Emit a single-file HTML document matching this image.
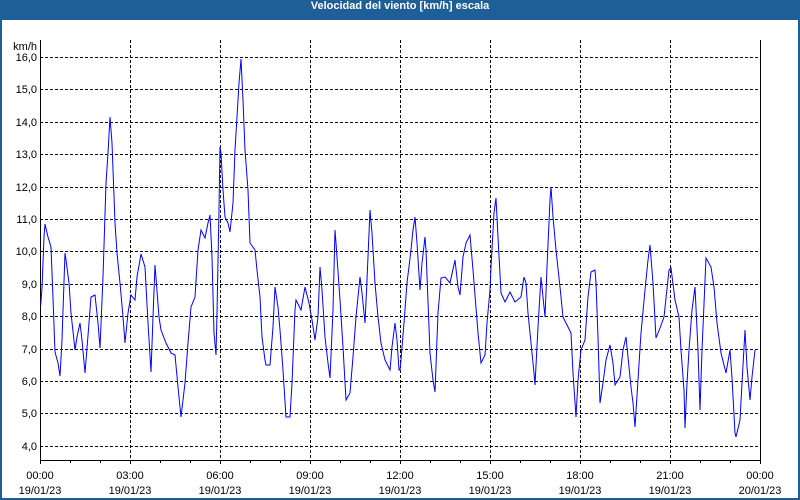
<!DOCTYPE html>
<html><head><meta charset="utf-8"><style>
html,body{margin:0;padding:0;width:800px;height:500px;overflow:hidden;background:#1e5f98;}
#w{position:absolute;left:2px;top:20px;width:796px;height:478px;background:#fff;}
#t{position:absolute;left:0;top:0;width:800px;height:20px;line-height:20px;text-align:center;color:#fff;font:bold 11px "Liberation Sans",sans-serif;}
svg{position:absolute;left:0;top:0}
text{font-family:"Liberation Sans",sans-serif;font-size:11px;fill:#000}
</style></head><body>
<div id="t">Velocidad del viento [km/h] escala</div>
<div id="w"></div>
<svg width="800" height="500" viewBox="0 0 800 500">
<g stroke="#000" stroke-width="1" stroke-dasharray="3,2" fill="none" shape-rendering="crispEdges">
<path d="M40 57.5H760M40 89.5H760M40 122.5H760M40 154.5H760M40 187.5H760M40 219.5H760M40 251.5H760M40 284.5H760M40 316.5H760M40 349.5H760M40 381.5H760M40 413.5H760M40 446.5H760"/>
<path d="M130.5 40V460M220.5 40V460M310.5 40V460M400.5 40V460M490.5 40V460M580.5 40V460M670.5 40V460"/>
</g>
<g stroke="#000" stroke-width="1" fill="none" shape-rendering="crispEdges">
<path d="M40.5 40V460.5H760.5V40"/>
<path d="M40.5 460v4M70.5 460v3M100.5 460v3M130.5 460v4M160.5 460v3M190.5 460v3M220.5 460v4M250.5 460v3M280.5 460v3M310.5 460v4M340.5 460v3M370.5 460v3M400.5 460v4M430.5 460v3M460.5 460v3M490.5 460v4M520.5 460v3M550.5 460v3M580.5 460v4M610.5 460v3M640.5 460v3M670.5 460v4M700.5 460v3M730.5 460v3M760.5 460v4"/>
</g>
<polyline fill="none" stroke="#0000ff" stroke-width="1" points="40.7,305 42,288 44,237 45,224 48,237 51,247 53,298 55,352 58,363 60,376 62,340 65,253 66,260 69,283 71,313 75,350 77,337 80,323 82,340 85,373 89,323 91,297 95,295 98,323 100,348 103,277 106,183 108,153 110,117 112,143 115,223 117,253 120,283 123,317 125,343 128,313 131,295 135,300 137,277 141,254 145,267 148,323 151,372 153,317 155,265 159,317 161,330 166,343 171,353 175,355 178,387 181,417 185,383 188,343 191,307 195,297 198,250 201,230 205,238 208,223 210,215 212,257 214,333 216,355 217,313 219,210 220,147 221,153 223,190 225,217 228,223 230,232 233,203 235,150 237,117 239,83 241,59 243,100 245,150 248,190 250,243 255,250 257,270 260,297 262,337 265,360 266,365 270,365 273,327 275,287 278,307 280,330 283,370 286,417 290,417 292,383 295,310 296,300 301,310 305,287 309,303 312,320 315,340 318,317 320,267 322,290 325,337 328,363 330,378 333,310 335,230 336,243 340,300 343,347 346,400 350,393 353,357 356,317 360,277 362,293 365,323 367,280 370,210 372,233 375,283 378,317 381,343 385,360 390,370 392,347 395,323 397,340 399,370 400,370 401,360 404,323 407,283 411,250 413,230 415,217 417,243 420,290 422,263 425,237 426,250 430,353 433,380 435,392 438,313 441,278 445,277 450,283 455,260 458,287 460,295 463,257 466,243 470,235 473,270 478,333 481,363 485,355 487,323 490,290 491,267 494,213 496,198 498,237 501,293 505,302 510,292 515,302 521,297 524,277 526,283 528,313 531,343 534,373 535,385 538,327 541,277 545,317 547,267 550,200 551,187 553,217 556,250 560,287 563,317 568,327 571,333 573,373 576,417 578,380 581,350 585,340 588,297 591,272 595,270 596,283 598,337 600,403 603,383 606,360 610,345 613,363 615,385 620,377 623,350 626,337 628,357 631,387 633,403 635,427 638,380 641,333 645,290 648,260 650,245 653,283 656,338 660,328 664,317 669,270 671,268 675,300 679,317 681,350 684,390 685,428 687,383 689,350 692,310 695,287 698,350 700,410 702,350 706,258 711,267 714,287 717,323 721,353 726,373 730,350 732,378 735,433 736,437 740,420 742,383 745,330 747,367 750,400 752,377 755,350"/>
<g text-anchor="end">
<text x="37" y="50">km/h</text>
<text x="37" y="61">16,0</text><text x="37" y="93">15,0</text><text x="37" y="126">14,0</text><text x="37" y="158">13,0</text><text x="37" y="191">12,0</text><text x="37" y="223">11,0</text><text x="37" y="255">10,0</text><text x="37" y="288">9,0</text><text x="37" y="320">8,0</text><text x="37" y="353">7,0</text><text x="37" y="385">6,0</text><text x="37" y="417">5,0</text><text x="37" y="450">4,0</text>
</g>
<g text-anchor="middle">
<text x="40" y="479">00:00</text><text x="40" y="494">19/01/23</text>
<text x="130" y="479">03:00</text><text x="130" y="494">19/01/23</text>
<text x="220" y="479">06:00</text><text x="220" y="494">19/01/23</text>
<text x="310" y="479">09:00</text><text x="310" y="494">19/01/23</text>
<text x="400" y="479">12:00</text><text x="400" y="494">19/01/23</text>
<text x="490" y="479">15:00</text><text x="490" y="494">19/01/23</text>
<text x="580" y="479">18:00</text><text x="580" y="494">19/01/23</text>
<text x="670" y="479">21:00</text><text x="670" y="494">19/01/23</text>
<text x="760" y="479">00:00</text><text x="760" y="494">20/01/23</text>
</g>
</svg>
</body></html>
